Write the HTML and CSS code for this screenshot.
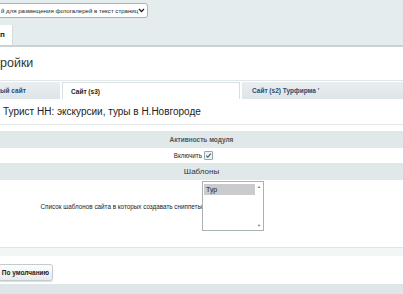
FILE: index.html
```html
<!DOCTYPE html>
<html lang="ru">
<head>
    <meta charset="UTF-8">
    <title>Настройки модуля</title>
    <link rel="stylesheet" href="styles.css">
</head>
<body>

    <!-- Top bar with module select -->
    <div class="top-bar">
        <div class="module-select">
            <span>й для размещения фотогалерей в текст страниц</span>
            <svg class="chev" width="7" height="5" viewBox="0 0 7 5"><path d="M1 1 L3.5 3.5 L6 1" fill="none" stroke="#222" stroke-width="1.3"/></svg>
        </div>
    </div>

    <div class="main-tabs">
        <div class="main-tab">п</div>
    </div>

    <div class="panel">
        <div class="title">ройки</div>

        <div class="site-tabs">
            <div class="site-tab first">ый сайт</div>
            <div class="site-tab active">Сайт (s3)</div>
            <div class="site-tab">Сайт (s2) Турфирма '</div>
        </div>

        <div class="site-name">Турист НН: экскурсии, туры в Н.Новгороде</div>

        <div class="section-head">Активность модуля</div>
        <div class="row short">
            <div class="label">Включить</div>
            <div class="field">
                <span class="check">
                    <svg width="7" height="7" viewBox="0 0 7 7"><path d="M1.2 3.6 L2.8 5.2 L5.8 1.6" fill="none" stroke="#4a5a62" stroke-width="1.1"/></svg>
                </span>
            </div>
        </div>

        <div class="section-head big">Шаблоны</div>
        <div class="row tall">
            <div class="label">Список шаблонов сайта в которых создавать сниппеты</div>
            <div class="field">
                <div class="listbox">
                    <div class="opt">Тур</div>
                    <div class="scroll">
                        <span>&#9650;</span>
                        <span>&#9660;</span>
                    </div>
                </div>
            </div>
        </div>

        <div class="footer-band"></div>
        <div class="buttons">
            <button class="btn">По умолчанию</button>
        </div>
    </div>
    <div class="bottom-band"></div>

</body>
</html>
```

FILE: styles.css
```css
body, html {
    margin: 0;
    height: 100%;
    overflow: hidden;
    background-color: #e5ecee;
    font-family: "Liberation Sans", Arial, sans-serif;
    color: #222;
}

/* Top bar */
.top-bar {
    height: 25px;
    padding-top: 3px;
    box-sizing: border-box;
}

.module-select {
    display: flex;
    align-items: center;
    justify-content: space-between;
    width: 152px;
    height: 15px;
    margin-left: -4px;
    padding: 0 3px 0 4px;
    box-sizing: border-box;
    background: #fff;
    border: 1px solid #a9b2b5;
    border-radius: 3px;
    font-size: 6.1px;
    white-space: nowrap;
}

.chev {
    flex: none;
}

/* Main tabs */
.main-tabs {
    display: flex;
    height: 20px;
    border-bottom: 2px solid #c9d2d5;
}

.main-tab {
    width: 12px;
    background: #fff;
    font-size: 8px;
    font-weight: bold;
    line-height: 20px;
    border-right: 1px solid #d5dcde;
}

/* White panel */
.panel {
    background: #fff;
    height: 237px;
}

.title {
    font-size: 12.5px;
    color: #333;
    height: 33px;
    line-height: 32px;
    border-bottom: 1px solid #e1e6e8;
}

.site-tabs {
    display: flex;
    gap: 2px;
    height: 17px;
    margin-top: 1px;
}

.site-tab {
    flex: 1;
    background: linear-gradient(#e9eef0, #dde5e8);
    color: #2b4c6f;
    font-size: 6.5px;
    font-weight: bold;
    line-height: 17px;
    padding-left: 10px;
    white-space: nowrap;
    overflow: hidden;
}

.site-tab.first {
    flex: none;
    width: 60px;
    padding-left: 0;
}

.site-tab.active {
    flex: none;
    width: 178px;
    background: #fff;
    color: #222;
    border: 1px solid #d8dfe2;
    border-bottom: none;
    box-sizing: border-box;
    padding-left: 8px;
}

.site-name {
    font-size: 10px;
    color: #222;
    height: 25px;
    line-height: 25px;
    padding-left: 3px;
    border-bottom: 1px solid #e5e9eb;
}

.section-head {
    margin-top: 6px;
    background: #e0e8ea;
    height: 17px;
    line-height: 17px;
    text-align: center;
    font-size: 6.5px;
    font-weight: bold;
    color: #555;
}

.section-head.big {
    margin-top: 1px;
    font-size: 8px;
    font-weight: normal;
    color: #333;
}

.row {
    display: flex;
    align-items: center;
}

.row.short {
    height: 14px;
}

.row.tall {
    height: 54px;
    padding-top: 1px;
    align-items: flex-start;
}

.label {
    width: 202px;
    text-align: right;
    font-size: 6.3px;
    color: #222;
    white-space: nowrap;
}

.row.tall .label {
    margin-top: 22px;
}

.field {
    padding-left: 2px;
}

.row.tall .field {
    padding-left: 0;
}

.check {
    display: inline-flex;
    width: 7px;
    height: 7px;
    border: 1px solid #9aa6ab;
    border-radius: 1px;
    background: #eef2f3;
    vertical-align: middle;
}

.listbox {
    position: relative;
    width: 62px;
    height: 50px;
    box-sizing: border-box;
    border: 1px solid #a9b2b5;
    background: #fff;
}

.opt {
    margin: 2px 0 0 1px;
    width: 51px;
    height: 11px;
    background: #c9cbcc;
    font-size: 7px;
    line-height: 11px;
    padding-left: 2px;
    box-sizing: border-box;
}

.scroll {
    position: absolute;
    top: 2px;
    right: 2px;
    bottom: 2px;
    display: flex;
    flex-direction: column;
    justify-content: space-between;
    font-size: 4px;
    color: #777;
}

.footer-band {
    margin-top: 12px;
    height: 8px;
    border-top: 1px solid #dfe5e7;
    background: #f2f6f7;
}

.buttons {
    padding: 5px 0 0 0;
}

.btn {
    height: 17px;
    width: 55px;
    margin-left: -2px;
    padding: 0;
    border: 1px solid #c4cbce;
    border-radius: 3px;
    background: linear-gradient(#fdfefe, #e6ebed);
    box-shadow: 0 1px 1px rgba(0,0,0,0.15);
    font-family: "Liberation Sans", Arial, sans-serif;
    font-size: 6.5px;
    font-weight: bold;
    color: #222;
}

.bottom-band {
    height: 10px;
    background: #dfe6e8;
}
```
